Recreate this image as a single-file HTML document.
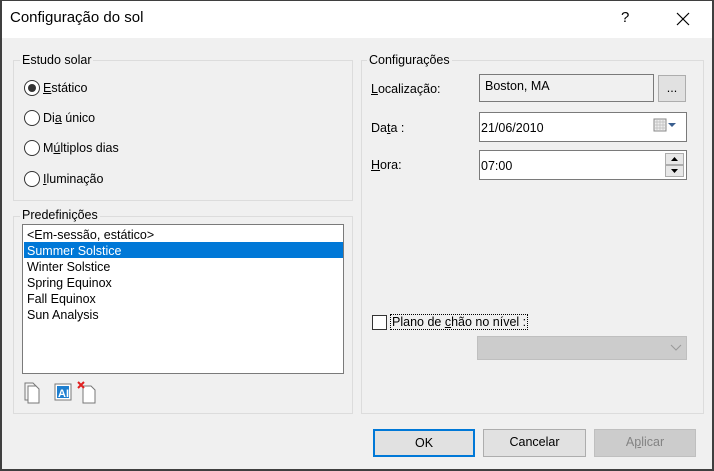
<!DOCTYPE html>
<html><head><meta charset="utf-8"><style>
*{margin:0;padding:0;box-sizing:border-box}
body{width:714px;height:471px;background:#f0f0f0;font-family:"Liberation Sans",sans-serif;font-size:12.5px;color:#000;position:relative;overflow:hidden}
.a{position:absolute}
.frame{left:0;top:0;width:714px;height:471px;border:2px solid #3f3f3f;border-top-width:1px}
.gb{border:1px solid #dcdcdc}
.gl{background:#f0f0f0;padding:0 2px;font-size:12.5px}
.rad{width:16px;height:16px;border:1px solid #333;border-radius:50%;background:#fff}
.tb{background:#fff;border:1px solid #7a7a7a}
.btn{background:#e1e1e1;border:1px solid #adadad;text-align:center;line-height:25px;font-size:12.5px}
u{text-decoration:underline}
</style></head><body>
<div class="a" style="left:0;top:0;width:714px;height:38px;background:#fff"></div>
<div class="a" style="left:10px;top:9px;font-size:15px">Configuração do sol</div>
<div class="a" style="left:621px;top:9px;font-size:15px">?</div>
<svg class="a" style="left:676px;top:12px" width="14" height="14"><path d="M1 1L13 13M13 1L1 13" stroke="#000" stroke-width="1.2"/></svg>

<div class="a gb" style="left:13px;top:60px;width:340px;height:141px"></div>
<div class="a gl" style="left:20px;top:53px">Estudo solar</div>
<div class="a rad" style="left:24px;top:80px"></div><div class="a" style="left:28px;top:84px;width:8px;height:8px;border-radius:50%;background:#333"></div>
<div class="a" style="left:43px;top:81px"><u>E</u>stático</div>
<div class="a rad" style="left:24px;top:110px"></div><div class="a" style="left:43px;top:111px">Di<u>a</u> único</div>
<div class="a rad" style="left:24px;top:140px"></div><div class="a" style="left:43px;top:141px">M<u>ú</u>ltiplos dias</div>
<div class="a rad" style="left:24px;top:171px"></div><div class="a" style="left:43px;top:172px"><u>I</u>luminação</div>

<div class="a gb" style="left:13px;top:216px;width:340px;height:198px"></div>
<div class="a gl" style="left:20px;top:208px">Predefinições</div>
<div class="a tb" style="left:22px;top:224px;width:322px;height:150px"></div>
<div class="a" style="left:24px;top:242px;width:319px;height:16px;background:#0078d7"></div>
<div class="a" style="left:27px;top:227px;line-height:16px">&lt;Em-sessão, estático&gt;<br><span style="color:#fff">Summer Solstice</span><br>Winter Solstice<br>Spring Equinox<br>Fall Equinox<br>Sun Analysis</div>
<svg class="a" style="left:17px;top:380px" width="90" height="24">
<path d="M8 3h8l3 3v14H8z" fill="#f4f4f4" stroke="#777"/><path d="M11 6h8l3 3v14H11z" fill="#fff" stroke="#777"/>
<rect x="38" y="4" width="16" height="16" fill="#fff" stroke="#777"/><rect x="40" y="6" width="12" height="12" fill="#1e7fd0"/><text x="41" y="17" font-size="11" font-weight="bold" fill="#fff" font-family="Liberation Sans">AI</text>
<path d="M66 6h8l4 4v13H66z" fill="#fff" stroke="#777"/><path d="M61 2l6 6M67 2l-6 6" stroke="#e02020" stroke-width="2"/>
</svg>

<div class="a gb" style="left:361px;top:60px;width:343px;height:354px"></div>
<div class="a gl" style="left:367px;top:53px">Configurações</div>
<div class="a" style="left:371px;top:82px"><u>L</u>ocalização:</div>
<div class="a" style="left:479px;top:74px;width:175px;height:28px;background:#f0f0f0;border:1px solid #7a7a7a"></div>
<div class="a" style="left:485px;top:79px">Boston, MA</div>
<div class="a btn" style="left:658px;top:75px;width:28px;height:27px;line-height:24px">...</div>
<div class="a" style="left:371px;top:121px">Da<u>t</u>a :</div>
<div class="a tb" style="left:479px;top:112px;width:208px;height:30px"></div>
<div class="a" style="left:481px;top:121px">21/06/2010</div>
<svg class="a" style="left:653px;top:118px" width="26" height="16"><rect x="1" y="1" width="12" height="12" fill="#eee" stroke="#888"/><path d="M4 1v12M7 1v12M10 1v12M1 4h12M1 7h12M1 10h12" stroke="#bbb" stroke-width="0.7"/><path d="M15 5h8l-4 4z" fill="#3a5f8f"/></svg>
<div class="a" style="left:371px;top:158px"><u>H</u>ora:</div>
<div class="a tb" style="left:479px;top:150px;width:208px;height:30px"></div>
<div class="a" style="left:481px;top:159px">07:00</div>
<div class="a" style="left:665px;top:153px;width:19px;height:12px;background:#e8e8e8;border:1px solid #adadad"></div>
<div class="a" style="left:665px;top:165px;width:19px;height:12px;background:#e8e8e8;border:1px solid #adadad"></div>
<svg class="a" style="left:665px;top:153px" width="19" height="24"><path d="M6 8h7l-3.5-4z M6 16h7l-3.5 4z" fill="#000"/></svg>
<div class="a" style="left:372px;top:315px;width:15px;height:15px;background:#fff;border:1px solid #333"></div>
<div class="a" style="left:390px;top:314px;border:1px dotted #000;padding:0 1px;line-height:14px">Plano de <u>c</u>hão no nível :</div>
<div class="a" style="left:477px;top:336px;width:210px;height:24px;background:#ccc;border:1px solid #bfbfbf"></div>
<svg class="a" style="left:670px;top:344px" width="12" height="8"><path d="M1 1l5 5 5-5" fill="none" stroke="#999"/></svg>

<div class="a btn" style="left:373px;top:429px;width:102px;height:28px;border:2px solid #0078d7;line-height:24px">OK</div>
<div class="a btn" style="left:483px;top:429px;width:103px;height:28px">Cancelar</div>
<div class="a btn" style="left:594px;top:429px;width:102px;height:28px;background:#cccccc;border-color:#bfbfbf;color:#838383">A<u>p</u>licar</div>
<div class="a frame"></div>
</body></html>
